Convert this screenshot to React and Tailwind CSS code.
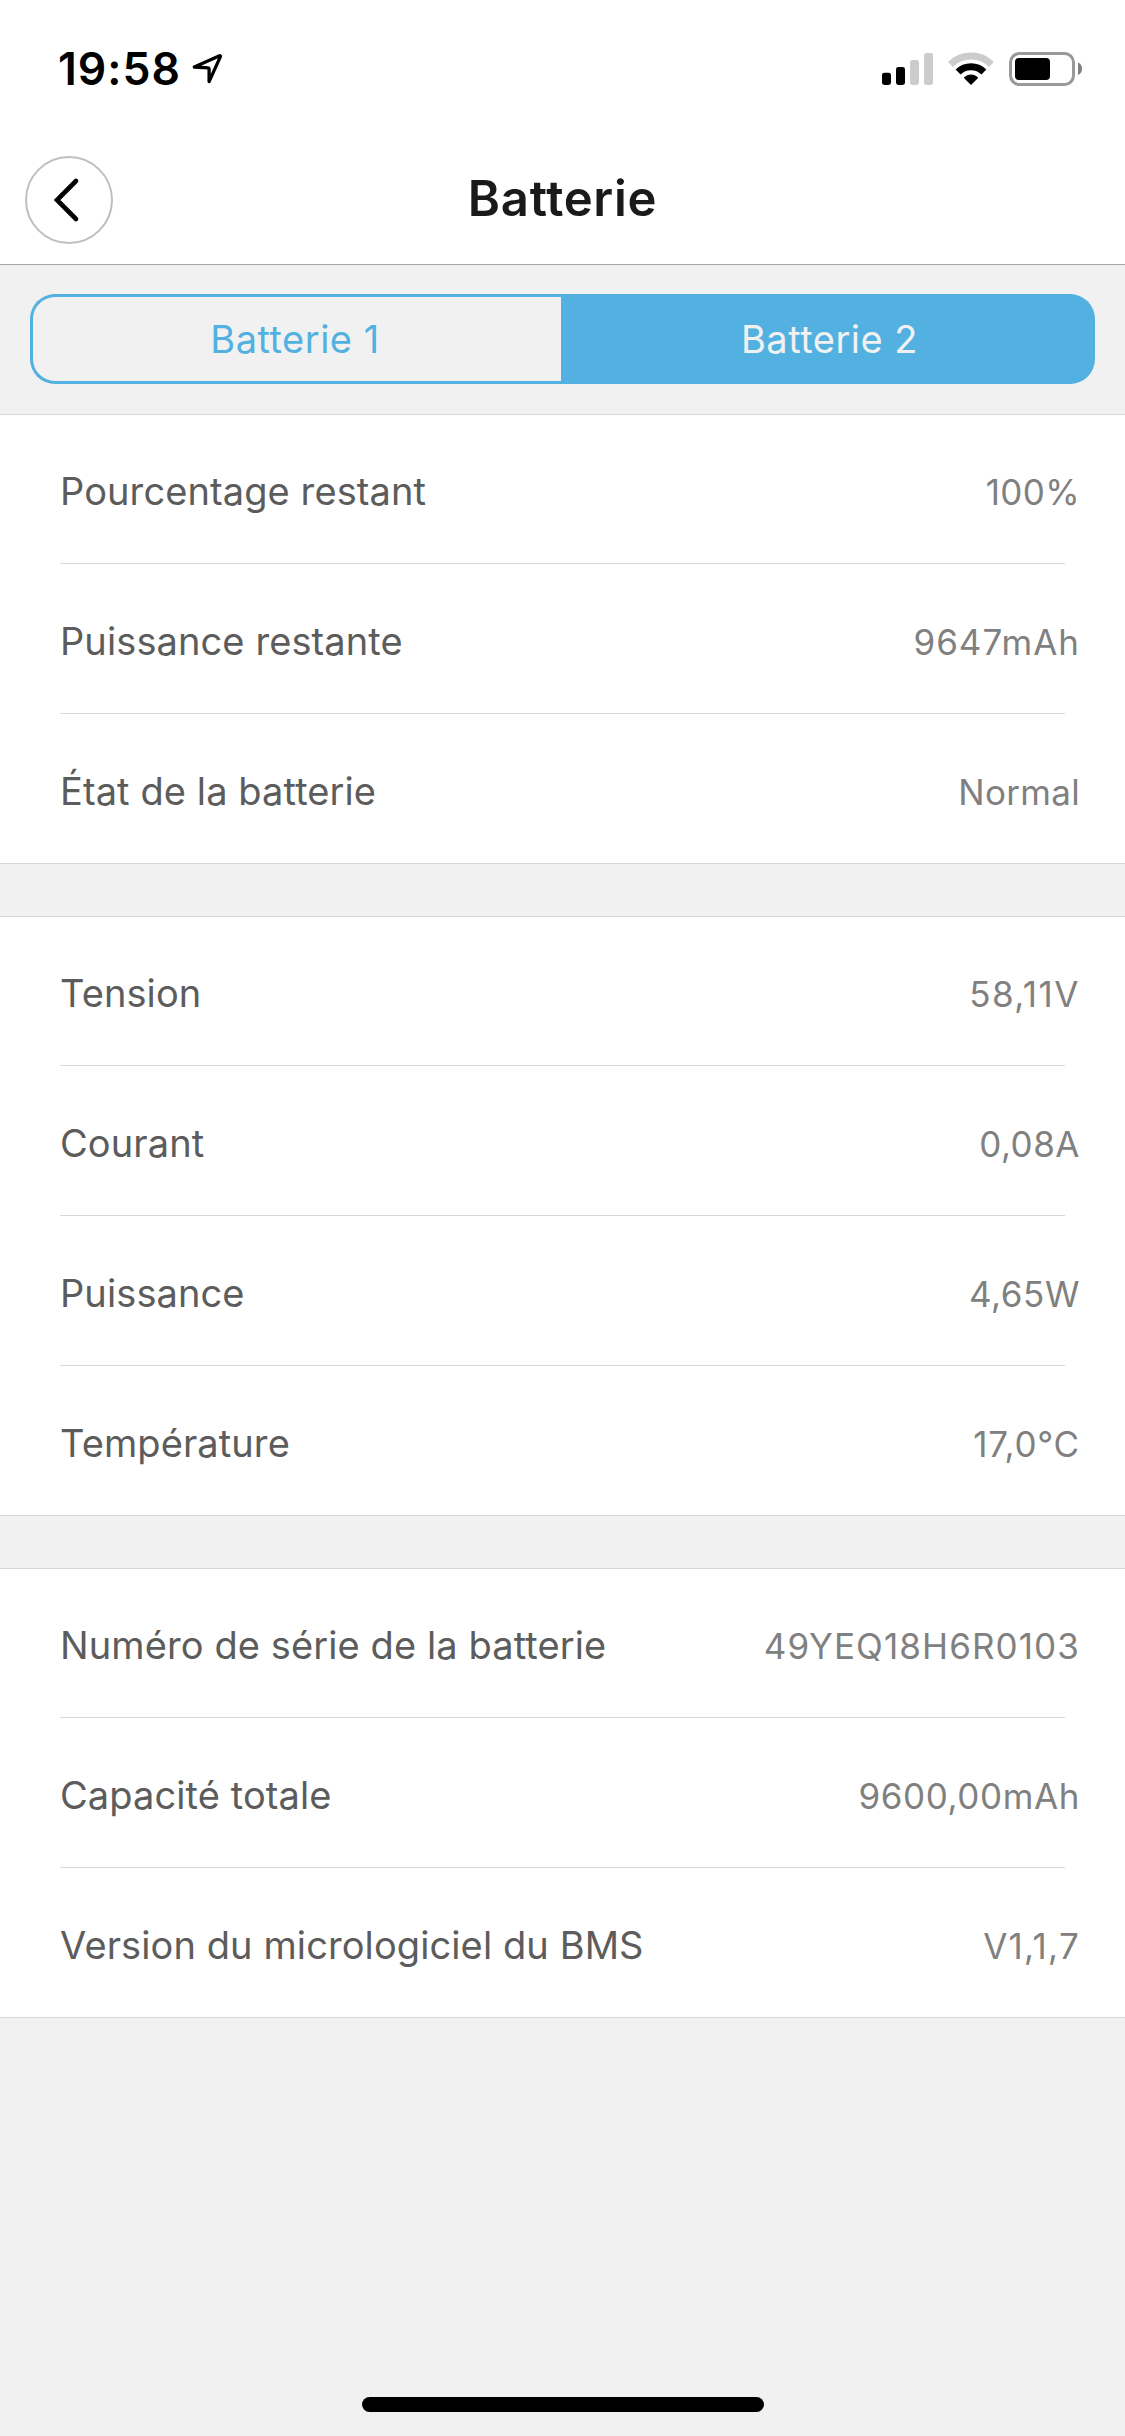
import { useState } from 'react';
import clsx from 'clsx';

const sections = [
  [
    { label: 'Pourcentage restant', value: '100%', tracking: 'tracking-[0.4px]' },
    { label: 'Puissance restante', value: '9647mAh', tracking: 'tracking-[1px]' },
    { label: 'État de la batterie', value: 'Normal', tracking: 'tracking-[0.3px]' },
  ],
  [
    { label: 'Tension', value: '58,11V', tracking: 'tracking-[1.5px]' },
    { label: 'Courant', value: '0,08A', tracking: 'tracking-[0.5px]' },
    { label: 'Puissance', value: '4,65W', tracking: 'tracking-[0.6px]' },
    { label: 'Température', value: '17,0°C', tracking: 'tracking-[0.8px]' },
  ],
  [
    { label: 'Numéro de série de la batterie', value: '49YEQ18H6R0103', tracking: 'tracking-[1.1px]' },
    { label: 'Capacité totale', value: '9600,00mAh', tracking: 'tracking-[0.6px]' },
    { label: 'Version du micrologiciel du BMS', value: 'V1,1,7', tracking: 'tracking-[1.3px]' },
  ],
];

const StatusBar = () => (
  <div className="flex h-[132px] items-start justify-between pl-[58px] pr-[42px] pt-[42px]">
    <div className="flex items-start">
      <span className="text-[44.5px] font-semibold leading-[54px] tracking-[1px] text-black">19:58</span>
      {/* Location arrow */}
      <svg className="ml-[10px] mt-[10px] h-[34px] w-[34px]" viewBox="0 0 34 34" fill="none">
        <path
          d="M3.3 15 28.6 3.8a.6.6 0 0 1 .8.8L18.1 29.6V16.9Q18.1 15.9 17.1 15.8Z"
          stroke="#000"
          strokeWidth="3.3"
          strokeLinejoin="round"
        />
      </svg>
    </div>

    <div className="mt-[10px] flex items-start">
      {/* Signal */}
      <svg className="h-[34px] w-[52px]" viewBox="0 0 52 34">
        <rect x="0" y="20.7" width="9" height="12.3" rx="2.4" fill="#000" />
        <rect x="14" y="15" width="9" height="18" rx="2.4" fill="#000" />
        <rect x="28" y="8" width="9" height="25" rx="2.4" fill="#ccc" />
        <rect x="42" y="1" width="9" height="32" rx="2.4" fill="#ccc" />
      </svg>
      {/* Wifi */}
      <svg className="ml-[14px] h-[34px] w-[46px]" viewBox="0 0 46 34" fill="none">
        <path d="M2.6 12.4a29 29 0 0 1 40.8 0" stroke="#ccc" strokeWidth="7" />
        <path d="M10.1 20a18.3 18.3 0 0 1 25.8 0" stroke="#000" strokeWidth="7" />
        <path d="M23 33 16 26q0-.8.8-1.3a10.3 10.3 0 0 1 12.4 0q.8.5.8 1.3Z" fill="#000" />
      </svg>
      {/* Battery */}
      <svg className="ml-[15px] h-[34px] w-[74px]" viewBox="0 0 74 34">
        <rect x="1.5" y="1.5" width="63" height="31" rx="9" fill="none" stroke="#999" strokeWidth="3" />
        <rect x="6" y="6" width="35" height="22" rx="4" fill="#000" />
        <path d="M69 10.5q4 1.8 4 6.3t-4 6.3Z" fill="#808080" />
      </svg>
    </div>
  </div>
);

const NavBar = ({ title }) => (
  <div className="grid h-[133px] grid-cols-[1fr_auto_1fr] items-center border-b border-[#a6a6a6] px-[25px]">
    <button className="mt-[3px] flex size-[88px] items-center justify-center rounded-full border-2 border-[#bfbfbf]">
      <svg className="size-[84px]" viewBox="0 0 84 84" fill="none">
        <path d="M49 23 30 42l19 19" stroke="#000" strokeWidth="4.6" strokeLinecap="round" />
      </svg>
    </button>
    <h1 className="pt-0.5 text-[49px] font-semibold leading-[60px] tracking-[0.7px] text-[#1a1a1a]">{title}</h1>
    <div />
  </div>
);

const Tabs = ({ tabs, active, onChange }) => (
  <div className="h-[149px] px-[30px] pt-[29px]">
    <div className="grid h-[90px] grid-cols-[531px_1fr]">
      {tabs.map((tab, i) => (
        <button
          key={tab}
          onClick={() => onChange(i)}
          className={clsx(
            'border-[3px] border-[#52b1e0] text-[38px] tracking-[0.5px]',
            i === 0 ? 'rounded-l-[25px] border-r-0 pr-1' : 'rounded-r-[25px] border-l-0 pl-1.5',
            i === active ? 'bg-[#52b1e0] text-[#f1f1f1]' : 'text-[#52b1e0]'
          )}
        >
          {tab}
        </button>
      ))}
    </div>
  </div>
);

const Row = ({ row, first, last }) => (
  <div
    className={clsx(
      'mx-[60px] border-[#d9d9d9]',
      first ? 'h-[149px] border-b pt-1' : 'pt-1.5',
      !first && !last && 'h-[150px] border-b',
      last && 'h-[149px]'
    )}
  >
    <div className="-mr-[15px] flex h-full items-center">
      <div className="flex w-full items-baseline justify-between">
        <span className="text-[38px] leading-[48px] tracking-[0.1px] text-[#5c5c5c]">{row.label}</span>
        <span className={clsx('text-[35px] leading-[48px] text-[#808080]', row.tracking)}>{row.value}</span>
      </div>
    </div>
  </div>
);

const Section = ({ rows }) => (
  <div className="border-y border-[#d9d9d9] bg-white">
    {rows.map((row, i) => (
      <Row key={row.label} row={row} first={i === 0} last={i === rows.length - 1} />
    ))}
  </div>
);

const App = () => {
  const [active, setActive] = useState(1);

  return (
    <div className="flex h-[2436px] w-[1125px] flex-col bg-[#f1f1f1] font-['Inter',sans-serif]">
      <div className="bg-white">
        <StatusBar />
        <NavBar title="Batterie" />
      </div>

      <Tabs tabs={['Batterie 1', 'Batterie 2']} active={active} onChange={setActive} />

      <div className="flex flex-col gap-[52px]">
        {sections.map((rows) => (
          <Section key={rows[0].label} rows={rows} />
        ))}
      </div>

      {/* Home indicator */}
      <div className="mx-auto mb-6 mt-auto h-[15px] w-[402px] rounded-full bg-black" />
    </div>
  );
};

export default App;
